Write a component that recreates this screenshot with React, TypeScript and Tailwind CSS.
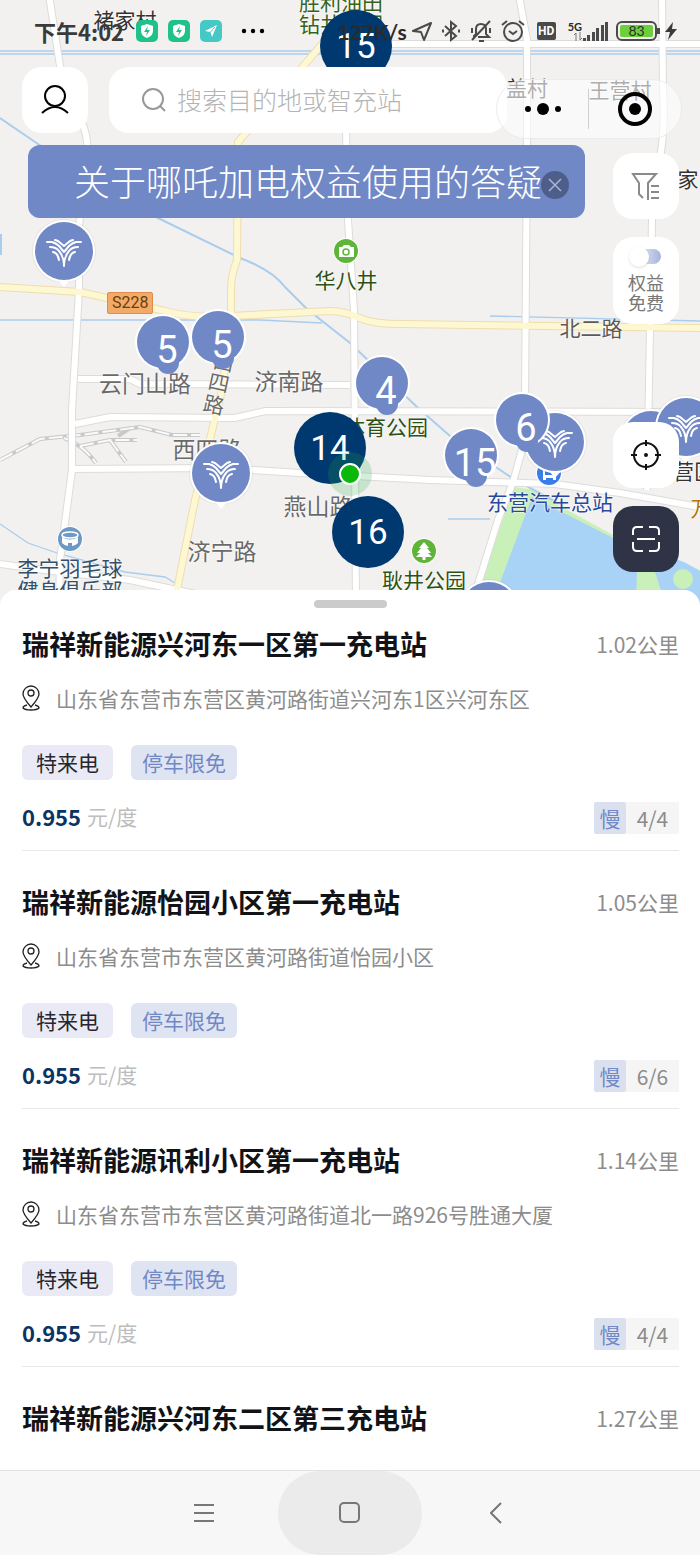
import React, { useState } from 'react';

interface Station {
  name: string;
  distance: string;
  address?: string;
  tags?: string[];
  price?: string;
  slow?: string;
}

const stations: Station[] = [
  {
    name: '瑞祥新能源兴河东一区第一充电站',
    distance: '1.02公里',
    address: '山东省东营市东营区黄河路街道兴河东1区兴河东区',
    tags: ['特来电', '停车限免'],
    price: '0.955',
    slow: '4/4',
  },
  {
    name: '瑞祥新能源怡园小区第一充电站',
    distance: '1.05公里',
    address: '山东省东营市东营区黄河路街道怡园小区',
    tags: ['特来电', '停车限免'],
    price: '0.955',
    slow: '6/6',
  },
  {
    name: '瑞祥新能源讯利小区第一充电站',
    distance: '1.14公里',
    address: '山东省东营市东营区黄河路街道北一路926号胜通大厦',
    tags: ['特来电', '停车限免'],
    price: '0.955',
    slow: '4/4',
  },
  { name: '瑞祥新能源兴河东二区第三充电站', distance: '1.27公里' },
];

// x / y are the centre of each item on the map
const labels = [
  { text: '褚家村', x: 125, y: 19, style: 'text-[21px] text-[#333333]' },
  { text: '胜利油田', x: 341, y: 1, style: 'text-[21px] text-[#35621c]' },
  { text: '钻井公园', x: 341, y: 23, style: 'text-[21px] text-[#35621c]' },
  { text: '盖村', x: 527, y: 87, style: 'text-[21px] text-[#333333]' },
  { text: '王营村', x: 620, y: 89, style: 'text-[21px] text-[#333333]' },
  { text: '家', x: 688, y: 178, style: 'text-[21px] text-[#333333]' },
  { text: '华八井', x: 346, y: 279, style: 'text-[21px] text-[#2c5215]' },
  { text: '云门山路', x: 145, y: 382, style: 'text-[23px] text-[#6a6a6a]' },
  { text: '济南路', x: 289, y: 380, style: 'text-[23px] text-[#6a6a6a]' },
  { text: '北二路', x: 591, y: 327, style: 'text-[21px] text-[#5a5a5a]' },
  { text: '西', x: 224, y: 361, style: 'rotate-12 text-[21px] text-[#6a6a6a]' },
  { text: '四', x: 219, y: 382, style: 'rotate-12 text-[21px] text-[#6a6a6a]' },
  { text: '路', x: 214, y: 404, style: 'rotate-12 text-[21px] text-[#6a6a6a]' },
  { text: '体育公园', x: 386, y: 426, style: 'text-[21px] text-[#2c5215]' },
  { text: '西四路', x: 207, y: 448, style: 'text-[23px] text-[#6a6a6a]' },
  { text: '燕山路', x: 318, y: 505, style: 'text-[23px] text-[#6a6a6a]' },
  { text: '济宁路', x: 222, y: 550, style: 'text-[23px] text-[#6a6a6a]' },
  { text: '李宁羽毛球', x: 70, y: 567, style: 'text-[21px] text-[#35506a]' },
  { text: '健身俱乐部', x: 70, y: 589, style: 'text-[21px] text-[#35506a]' },
  { text: '东营汽车总站', x: 550, y: 501, style: 'text-[21px] text-[#2a489a]' },
  { text: '耿井公园', x: 424, y: 579, style: 'text-[21px] text-[#2c5215]' },
  { text: '营区', x: 694, y: 470, style: 'text-[21px] text-[#333333]' },
  { text: '万', x: 701, y: 507, style: 'text-[21px] text-[#b0760c]' },
];

const logoPins = [
  { x: 64, y: 251 },
  { x: 221, y: 473 },
  { x: 555, y: 442 },
  { x: 651, y: 440 },
  { x: 686, y: 427 },
  { x: 489, y: 611 },
];

const countPins = [
  { count: 5, x: 163, y: 342 },
  { count: 5, x: 218, y: 337 },
  { count: 4, x: 382, y: 383 },
  { count: 15, x: 471, y: 455 },
  { count: 6, x: 522, y: 420 },
];

const clusterPins = [
  { count: 15, x: 356, y: 46 },
  { count: 14, x: 330, y: 448 },
  { count: 16, x: 368, y: 532 },
];

const whiteRoads = [
  'M49 -5L60 66L84 128Q90 145 86 170L79 225L79 290L72 410L72 470L60 560L59 610',
  'M391 44H705',
  'M519 -5L527 40V140L525 400L522 450L513 482',
  'M662 -5L663 90Q666 130 658 170L652 220L650 330L647 490',
  'M346 130L348 220L354 310L356 610',
  'M78 379H130L140 384L350 385',
  'M75 424L110 417L235 418L265 411L705 412',
  'M72 469L220 468L300 473L430 480L555 484L620 493L705 508',
  'M0 564L60 572L130 580L210 597',
  'M513 482L498 520L470 610',
];

const yellowRoads = [
  'M360 0L238 142L237 260Q231 275 231 290V318L222 390L195 500L174 605',
  'M0 287L80 292L107 298L165 311Q195 319 232 316L330 311Q345 311 362 319Q375 324 400 324L700 328',
];

const waterLines = [
  'M0 51H700',
  'M0 54H700',
  'M0 320H260L322 323',
  'M490 316L700 321',
  'M0 524L28 543L60 554L125 572L165 577L175 583',
  'M448 519H490',
];

function MapBase() {
  return (
    <svg className="absolute left-0 top-0" width="700" height="620" viewBox="0 0 700 620" fill="none" aria-hidden="true">
      <path d="M514 487L534 490L560 506L613 535L700 570V620H468Z" fill="#c8f0b8" />
      <path d="M532 497L560 511L613 538L684 562L700 571V620H486Z" fill="#a8d3f6" />
      <path d="M637 572H655L664 600H636Z" fill="#c8f0b8" />
      <circle cx="683" cy="579" r="10" fill="#c8f0b8" />
      <path
        d="M0 118L38 144L158 218L240 258Q272 270 285 287L307 309L350 343L417 407L450 436L515 480L560 504"
        stroke="#a9cdee"
        strokeWidth="2"
      />
      {waterLines.map(d => (
        <path key={d} d={d} stroke="#a9cdee" strokeWidth="1.3" />
      ))}
      <path d="M0 234V255" stroke="#a9cdee" strokeWidth="4" />

      {/* railway yard */}
      <g stroke="#c9c9c9" strokeWidth="4">
        <path d="M0 460L40 439L80 435L140 427L172 435L200 435" />
        <path d="M64 438Q82 444 96 463" />
        <path d="M80 446L110 440L137 440M110 440L126 462M118 436L130 428" />
      </g>
      <g stroke="#fafafa" strokeWidth="2" strokeDasharray="14 4">
        <path d="M0 460L40 439L80 435L140 427L172 435L200 435" />
        <path d="M64 438Q82 444 96 463" />
        <path d="M80 446L110 440L137 440M110 440L126 462" />
      </g>

      {whiteRoads.map(d => (
        <path key={d} d={d} stroke="#dddcda" strokeWidth="8" />
      ))}
      {yellowRoads.map(d => (
        <path key={d} d={d} stroke="#eeddb0" strokeWidth="8" />
      ))}
      {whiteRoads.map(d => (
        <path key={d} d={d} stroke="#ffffff" strokeWidth="6" />
      ))}
      {yellowRoads.map(d => (
        <path key={d} d={d} stroke="#fef8d2" strokeWidth="6" />
      ))}

      {/* points of interest */}
      <circle cx="346" cy="251" r="13" fill="#fff" />
      <circle cx="346" cy="251" r="12" fill="#5fb53a" />
      <path d="M339 247H342L344 245H349L351 247H354V257H339Z" fill="#fff" />
      <circle cx="346" cy="252" r="3" stroke="#5fb53a" strokeWidth="1.5" />
      <circle cx="424" cy="551" r="13" fill="#fff" />
      <circle cx="424" cy="551" r="12" fill="#5fb53a" />
      <path d="M424 542L429 548H427L431 553H428L432 557H425.500V560H422.500V557H416L420 553H417L421 548H419Z" fill="#fff" />
      <circle cx="70" cy="539" r="13" fill="#fff" />
      <circle cx="70" cy="539" r="12" fill="#6c9ac4" />
      <ellipse cx="70" cy="535" rx="8" ry="3" stroke="#fff" strokeWidth="1.5" />
      <path d="M62 537Q70 542 78 537V543Q75 546 72 546V543H68V546Q65 546 62 543Z" fill="#fff" />
      <circle cx="549" cy="473" r="13" fill="#fff" />
      <circle cx="549" cy="473" r="12" fill="#3b7de8" />
      <path d="M543 468H556V480H553V478H546V480H543Z" fill="#fff" />
      <path d="M545 471H554V475H545Z" fill="#3b7de8" />
    </svg>
  );
}

function LogoPin() {
  return (
    <svg width="66" height="74" viewBox="-33 -33 66 74" fill="none" aria-hidden="true">
      <circle r="32" fill="#000" opacity="0.05" />
      <path d="M-7 28L0 36L7 28Z" fill="#fff" />
      <circle r="31" fill="#fff" />
      <circle r="29" fill="#7088c6" />
      <g stroke="#fff" strokeWidth="2" strokeLinecap="round" strokeLinejoin="round">
        <path d="M-9 -11L-6 -10L0 -5L6 -10L9 -11" />
        <path d="M-17 -9L-12 -9Q-8 -8 -5 -5L0 1L5 -5Q8 -8 12 -9L17 -9" />
        <path d="M-14 -4Q-8 -4 -5 0Q0 6 0 15Q0 6 5 0Q8 -4 14 -4" />
        <path d="M-11 1Q-6 2 -5 9M11 1Q6 2 5 9" />
      </g>
    </svg>
  );
}

function CountPin({ count }: { count: number }) {
  return (
    <div className="relative size-14">
      <svg className="absolute inset-0 overflow-visible" width="56" height="56" viewBox="-28 -28 56 56" aria-hidden="true">
        <circle r="28" fill="#fff" />
        <circle r="26" fill="#7088c6" />
        <circle cx="5" cy="21" r="11" fill="#7088c6" />
      </svg>
      <span className="absolute inset-0 flex translate-x-1 translate-y-2 items-center justify-center font-[Roboto] text-[38px] leading-none text-white">
        {count}
      </span>
    </div>
  );
}

function MapLayer() {
  return (
    <div className="absolute inset-0 overflow-hidden">
      <MapBase />
      <span className="absolute left-[107px] top-[292px] rounded-xs border border-[#e08c4c] bg-[#f2ab66] px-1 font-[Roboto] text-base leading-5 text-[#6b3d10]">
        S228
      </span>
      {labels.map((l, i) => (
        <span
          key={i}
          className={`absolute -translate-x-1/2 -translate-y-1/2 whitespace-nowrap leading-none [text-shadow:0_0_2px_#fff,0_0_2px_#fff] ${l.style}`}
          style={{ left: l.x, top: l.y }}
        >
          {l.text}
        </span>
      ))}
      {logoPins.map((p, i) => (
        <div key={i} className="absolute -ml-[33px] -mt-[33px]" style={{ left: p.x, top: p.y }}>
          <LogoPin />
        </div>
      ))}
      {countPins.map((p, i) => (
        <div key={i} className="absolute -ml-7 -mt-7" style={{ left: p.x, top: p.y }}>
          <CountPin count={p.count} />
        </div>
      ))}
      {clusterPins.map((p, i) => (
        <div
          key={i}
          className="absolute -ml-9 -mt-9 flex size-[72px] items-center justify-center rounded-full bg-[#003870] font-[Roboto] text-[35px] leading-none text-white"
          style={{ left: p.x, top: p.y }}
        >
          {p.count}
        </div>
      ))}
      {/* my position */}
      <div className="absolute left-[328px] top-[452px] flex size-11 items-center justify-center rounded-full bg-[#22aa44]/20">
        <div className="size-[22px] rounded-full border-2 border-white bg-[#0ab80a]" />
      </div>
    </div>
  );
}

function StatusBar() {
  return (
    <div className="flex h-[62px] items-center justify-between pl-[34px] pr-[22px] text-[#2b2b2b]">
      <div className="flex items-center gap-[10px]">
        <span className="mr-0.5 text-[22px] font-bold leading-none text-[#3a3a3a]">下午4:02</span>
        {[0, 1].map(i => (
          <svg key={i} width="22" height="22" viewBox="0 0 22 22" aria-hidden="true">
            <rect width="22" height="22" rx="5" fill="#1fc28a" />
            <path d="M11 4L17 6V11Q17 16 11 18Q5 16 5 11V6Z" fill="#fff" />
            <path d="M12 6L8 12H11L10 16L14 10H11Z" fill="#1fc28a" />
          </svg>
        ))}
        <svg width="22" height="22" viewBox="0 0 22 22" aria-hidden="true">
          <rect width="22" height="22" rx="5" fill="#45c9c4" />
          <path d="M5 11L17 5L12 17L10.500 12Z" fill="#fff" />
          <path d="M10.500 12L15 7" stroke="#45c9c4" />
        </svg>
        <svg className="ml-[9px]" width="24" height="6" viewBox="0 0 24 6" aria-hidden="true">
          <circle cx="3" cy="3" r="2.200" />
          <circle cx="12" cy="3" r="2.200" />
          <circle cx="21" cy="3" r="2.200" />
        </svg>
      </div>
      <div className="flex items-center gap-2">
        <span className="font-[Lato] text-[21px] font-bold leading-none">127K/s</span>
        <svg className="-ml-1" width="22" height="22" viewBox="0 0 22 22" fill="none" stroke="#4a4a4a" strokeWidth="2" strokeLinejoin="round" aria-hidden="true">
          <path d="M20 3L2 11L10 12L13 20Z" />
        </svg>
        <svg width="20" height="24" viewBox="0 0 20 24" fill="none" stroke="#4a4a4a" strokeWidth="2" aria-hidden="true">
          <path d="M4 7L15 17L10 21V3L15 7L4 17" />
          <path d="M1 12H3M17 12H19" strokeWidth="3" />
        </svg>
        <svg width="24" height="24" viewBox="0 0 24 24" fill="none" stroke="#4a4a4a" strokeWidth="2" aria-hidden="true">
          <path d="M5 18V17L7 15V10Q7 5 12 5Q17 5 17 10V15L20 18H9" />
          <path d="M21 2L3 21M10 22H15M3 9V14M21 9V14" />
        </svg>
        <svg width="24" height="24" viewBox="0 0 24 24" fill="none" stroke="#4a4a4a" strokeWidth="2" aria-hidden="true">
          <circle cx="12" cy="13" r="9" />
          <path d="M8 12L12 15L16 12M1 6L6 2M23 6L18 2" />
        </svg>
        <span className="mx-1 w-[19px] rounded-xs bg-[#4a4a4a] text-center font-[Roboto] text-xs font-bold leading-[18px] text-white">HD</span>
        <span className="flex items-end gap-px">
          <span className="flex flex-col items-end font-[Lato] text-[11px] font-bold leading-none">
            5G
            <svg width="8" height="9" viewBox="0 0 8 9" fill="none" stroke="#777" aria-hidden="true">
              <path d="M2 9V1L0 3M6 0V8L8 6" />
            </svg>
          </span>
          <svg width="25" height="20" viewBox="0 0 25 20" fill="#4a4a4a" aria-hidden="true">
            <path d="M0 17H3V20H0ZM4 14H7V20H4ZM9 11H12V20H9ZM13 7H16V20H13ZM18 4H21V20H18ZM22 1H25V20H22Z" />
          </svg>
        </span>
        <span className="flex items-center">
          <span className="flex h-5 w-[41px] rounded-md border-2 border-[#4a4a4a] p-0.5">
            <span className="flex flex-1 items-center justify-center rounded-xs bg-[#6dcf3c] font-[Lato] text-[14px] leading-none">
              83
            </span>
          </span>
          <span className="h-1.5 w-[3px] bg-[#4a4a4a]" />
        </span>
        <svg className="-ml-1" width="14" height="18" viewBox="0 0 14 18" fill="#3a3a3a" aria-hidden="true">
          <path d="M9 0L1 10H6L4 18L13 7H8Z" />
        </svg>
      </div>
    </div>
  );
}

function SearchRow() {
  return (
    <div className="mt-[5px] flex items-start pl-[22px] pr-[18px]">
      <button aria-label="我的" className="flex size-[66px] shrink-0 items-center justify-center rounded-[20px] bg-white">
        <svg width="30" height="32" viewBox="0 0 30 32" fill="none" stroke="#000" strokeWidth="2" aria-hidden="true">
          <circle cx="15" cy="12" r="10" />
          <path d="M2 29Q15 17 28 29" />
        </svg>
      </button>
      <label className="ml-[21px] flex h-[66px] min-w-0 flex-1 items-center gap-2 rounded-[20px] bg-white pl-8">
        <svg className="shrink-0" width="28" height="28" viewBox="0 0 28 28" fill="none" stroke="#999" strokeWidth="2" aria-hidden="true">
          <circle cx="12" cy="13" r="10" />
          <path d="M19 20L24 25" />
        </svg>
        <input
          type="text"
          aria-label="搜索"
          placeholder="搜索目的地或智充站"
          className="min-w-0 flex-1 bg-transparent text-[25px] font-light outline-none placeholder:text-[#b4b4b4]"
        />
      </label>
      {/* mini program capsule */}
      <div className="-ml-[11px] mt-3 flex h-[60px] w-[186px] shrink-0 items-center rounded-full border border-[#ececea] bg-white/60">
        <button aria-label="更多" className="flex h-full w-[91px] items-center justify-center">
          <svg width="38" height="12" viewBox="0 0 38 12" aria-hidden="true">
            <circle cx="4" cy="6" r="3" />
            <circle cx="19" cy="6" r="6" />
            <circle cx="34" cy="6" r="3" />
          </svg>
        </button>
        <div className="h-10 w-px bg-[#d0d0d0]" />
        <button aria-label="关闭小程序" className="flex h-full flex-1 items-center justify-center">
          <svg width="36" height="36" viewBox="0 0 36 36" aria-hidden="true">
            <circle cx="18" cy="18" r="15" fill="none" stroke="#000" strokeWidth="4" />
            <circle cx="18" cy="18" r="6" />
          </svg>
        </button>
      </div>
    </div>
  );
}

function SideTools() {
  const [free, setFree] = useState(false);

  return (
    <div className="mt-2 flex w-[66px] shrink-0 flex-col gap-[18px]">
      <button aria-label="筛选" className="flex h-[66px] items-center justify-center rounded-[20px] bg-white">
        <svg width="30" height="30" viewBox="0 0 30 30" fill="none" stroke="#8a8a8a" strokeWidth="2" aria-hidden="true">
          <path d="M12 27L8 23V12L2 3H25L17 12V29" />
          <path d="M20 15H28M20 21H28M20 27H28" />
        </svg>
      </button>
      <label className="flex h-[87px] flex-col items-center rounded-[20px] bg-white pt-3 text-lg leading-5 text-[#777]">
        <input
          type="checkbox"
          role="switch"
          checked={free}
          onChange={e => setFree(e.target.checked)}
          className="relative mb-2 h-[15px] w-[30px] appearance-none rounded-full bg-linear-to-r from-white to-[#a5b3dc] before:absolute before:-left-0.5 before:-top-0.5 before:size-5 before:rounded-full before:bg-white before:shadow checked:before:left-3"
        />
        <span>权益</span>
        <span>免费</span>
      </label>
      <button aria-label="定位" className="mt-20 flex h-[66px] items-center justify-center rounded-[20px] bg-white">
        <svg width="32" height="32" viewBox="0 0 32 32" fill="none" stroke="#111" strokeWidth="2" aria-hidden="true">
          <circle cx="16" cy="16" r="12" />
          <circle cx="16" cy="16" r="1" fill="#111" />
          <path d="M16 1V7M16 25V31M1 16H7M25 16H31" />
        </svg>
      </button>
      <button aria-label="扫码" className="flex h-[66px] items-center justify-center rounded-[20px] bg-[#2e3446]">
        <svg width="28" height="28" viewBox="0 0 28 28" fill="none" stroke="#fff" strokeWidth="2" aria-hidden="true">
          <path d="M1 10V6Q1 2 5 2H11M17 2H23Q27 2 27 6V10M27 17V22Q27 26 23 26H17M11 26H5Q1 26 1 22V17M5 14H23" />
        </svg>
      </button>
    </div>
  );
}

function StationItem({ station }: { station: Station }) {
  return (
    <li className="border-b border-[#e8e8e8] pb-4 pt-[33px] first:pt-[18px] last:border-0">
      <div className="flex items-center justify-between">
        <h2 className="text-[27px] font-bold leading-9 text-[#111317]">{station.name}</h2>
        <span className="text-[21px] leading-9 text-[#8c8c8c]">{station.distance}</span>
      </div>
      {station.address && (
        <p className="mt-[21px] flex items-center gap-4 text-[21px] leading-[30px] text-[#8c8c8c]">
          <svg className="shrink-0" width="18" height="26" viewBox="0 0 18 26" fill="none" stroke="#222" strokeWidth="1.300" aria-hidden="true">
            <path d="M9 22Q1 13 1 9A8 8 0 0 1 17 9Q17 13 9 22Z" />
            <circle cx="9" cy="8" r="3" />
            <path d="M5 20Q1 21 1 23Q3 25 9 25Q15 25 17 23Q17 21 13 20" />
          </svg>
          {station.address}
        </p>
      )}
      {station.tags && (
        <div className="mt-8 flex gap-[18px] text-[21px] leading-[35px]">
          <span className="rounded-md bg-[#eaeaf6] px-3.5 text-[#26262c]">{station.tags[0]}</span>
          <span className="rounded-md bg-[#dfe4f3] px-[11px] text-[#7088c6]">{station.tags[1]}</span>
        </div>
      )}
      {station.price && (
        <div className="mt-[22px] flex items-center justify-between text-[21px] leading-8">
          <div className="-mt-1 flex items-center gap-1.5">
            <span className="text-[22px] font-bold text-[#0a3462]">{station.price}</span>
            <span className="text-[#bdbdbd]">元/度</span>
          </div>
          <div className="flex text-[#8c8c8c]">
            <span className="w-8 rounded-xs bg-[#dbe0ef] text-center text-[#7088c6]">慢</span>
            <span className="w-[53px] bg-[#f5f5f5] text-center">{station.slow}</span>
          </div>
        </div>
      )}
    </li>
  );
}

function SystemNav() {
  return (
    <nav className="flex h-[85px] justify-center gap-0.5 border-t border-[#e2e2e2] bg-[#f7f7f7]">
      <button aria-label="菜单" className="flex w-36 items-center justify-center">
        <svg width="20" height="18" viewBox="0 0 20 18" stroke="#777" strokeWidth="2" aria-hidden="true">
          <path d="M0 1H20M0 9H20M0 17H20" />
        </svg>
      </button>
      <button aria-label="主页" className="flex w-36 items-center justify-center rounded-full bg-[#ebebeb]">
        <svg width="22" height="22" viewBox="0 0 22 22" fill="none" stroke="#777" strokeWidth="2" aria-hidden="true">
          <rect x="1" y="1" width="19" height="19" rx="4" />
        </svg>
      </button>
      <button aria-label="返回" className="flex w-36 items-center justify-center">
        <svg width="12" height="22" viewBox="0 0 12 22" fill="none" stroke="#777" strokeWidth="2" aria-hidden="true">
          <path d="M11 1L1 11L11 21" />
        </svg>
      </button>
    </nav>
  );
}

export default function App() {
  const [showNotice, setShowNotice] = useState(true);

  return (
    <div className="flex min-h-screen flex-col bg-white font-['Noto_Sans_CJK_SC',sans-serif]">
      <header className="relative bg-[#f2f1ef] pb-[34px]">
        <MapLayer />
        <div className="relative">
          <StatusBar />
          <SearchRow />
          <div className="mt-1.5 flex items-start justify-end gap-7 pl-7 pr-[21px]">
            {showNotice && (
              <div className="relative min-w-0 flex-1 rounded-xl bg-[#7088c6] pb-[13px] pt-[11px] pl-[46px]">
                <p className="whitespace-nowrap text-[36px] font-light leading-[49px] text-white">关于哪吒加电权益使用的答疑</p>
                <button
                  aria-label="关闭"
                  onClick={() => setShowNotice(false)}
                  className="absolute right-4 top-[26px] flex size-7 items-center justify-center rounded-full bg-[#46577f]/85"
                >
                  <svg width="14" height="14" viewBox="0 0 14 14" stroke="#aab6d6" strokeWidth="1.500" aria-hidden="true">
                    <path d="M1 1L13 13M13 1L1 13" />
                  </svg>
                </button>
              </div>
            )}
            <SideTools />
          </div>
        </div>
      </header>
      <main className="relative -mt-4 flex-1 rounded-t-2xl bg-white pl-[22px] pr-[21px] pt-2.5">
        <div className="mx-auto h-2 w-[73px] rounded-full bg-[#cbcbcb]" />
        <ul>
          {stations.map(s => (
            <StationItem key={s.name} station={s} />
          ))}
        </ul>
      </main>
      <SystemNav />
    </div>
  );
}
